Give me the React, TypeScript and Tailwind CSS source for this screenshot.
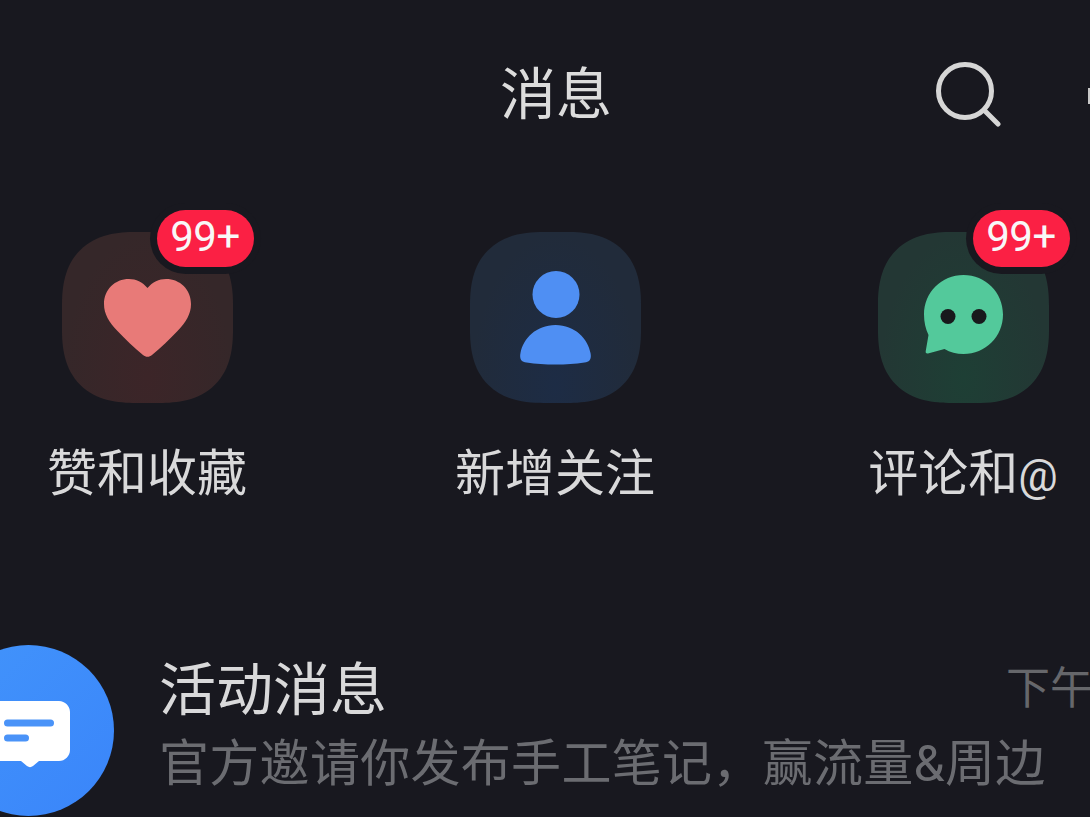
const font = { fontFamily: '"Noto Sans CJK SC", "Noto Sans", sans-serif' };
const latinFirst = { fontFamily: 'Roboto, "Noto Sans CJK SC", sans-serif' };

function Badge() {
  return (
    <div className="absolute left-[88px] top-[-29px] flex h-[71px] w-[111px] items-center justify-center rounded-[36px] bg-[#18181f]">
      <div className="flex h-[57px] w-[97px] items-center justify-center rounded-[29px] bg-[#fb2044] pb-[4px] text-[42px] leading-none tracking-[-0.5px] text-[#f8f8f8] [font-family:Roboto,sans-serif] font-normal">
        99+
      </div>
    </div>
  );
}

function Heart() {
  return (
    <svg width="87" height="78" viewBox="0 0 87 78" className="mt-[1px]">
      <path
        d="M43.5 9C38.500 3 32 0 25 0 11 0 0 10.500 0 25c0 10 5 18 13.500 27 7.500 8 16.500 16.500 25.500 24 2.800 2.400 6.200 2.400 9 0 9-7.500 18-16 25.500-24C82 43 87 35 87 25 87 10.500 76 0 62 0c-7 0-13.500 3-18.500 9Z"
        fill="#e87a78"
      />
    </svg>
  );
}

function Person() {
  return (
    <svg width="71" height="94" viewBox="0 0 71 94">
      <circle cx="36" cy="23.500" r="23.500" fill="#4f8ff3" />
      <path
        d="M35.500 54C16 54 3 68 0.500 82c-1 5 0 9 6 9.500C16 93 25 93.500 35.500 93.500S55 93 64.500 91.500c6-.5 7-4.500 6-9.500C68 68 55 54 35.500 54Z"
        fill="#4f8ff3"
      />
    </svg>
  );
}

function Chat() {
  return (
    <svg width="80" height="80" viewBox="0 0 80 80" className="mt-[-6px]">
      <path
        d="M40.500 0C62.500 0 80 17.500 80 39.500S62.500 79 40.500 79c-7 0-13.500-1.800-19-5L5 78.500c-1.500.4-2.600-.6-2.300-2.200L5.500 60C2.500 54 1 47 1 39.500 1 17.500 18.500 0 40.500 0Z"
        fill="#53c99b"
      />
      <circle cx="25" cy="41.500" r="7.500" fill="#18191c" />
      <circle cx="56" cy="41.500" r="7.500" fill="#18191c" />
    </svg>
  );
}

function Tile({
  label,
  gradient,
  badge,
  icon,
}: {
  label: React.ReactNode;
  gradient: string;
  badge?: boolean;
  icon: React.ReactNode;
}) {
  return (
    <div className="flex flex-col items-center">
      <div className={`relative flex h-[171px] w-[171px] items-center justify-center rounded-[74px] [corner-shape:superellipse(1.3)] ${gradient}`}>
        {icon}
        {badge && <Badge />}
      </div>
      <div className="mt-[42px] whitespace-nowrap text-[50px] leading-[58px] text-[#d9d9da]" style={latinFirst}>{label}</div>
    </div>
  );
}

function BubbleIcon() {
  return (
    <svg width="171" height="171" viewBox="0 0 171 171" className="shrink-0">
      <defs>
        <linearGradient id="avatar" x1="0" y1="0" x2="1" y2="1">
          <stop offset="0" stopColor="#4294fb" />
          <stop offset="1" stopColor="#3a85fa" />
        </linearGradient>
      </defs>
      <circle cx="85.500" cy="85.500" r="85.500" fill="url(#avatar)" />
      <path
        d="M36 56h80c6 0 11 5 11 11v38c0 6-5 11-11 11H96l-6 5c-2 1.500-4 1.500-6 0l-6-5H36c-6 0-11-5-11-11V67c0-6 5-11 11-11Z"
        fill="#ffffff"
      />
      <rect x="61" y="74.500" width="50" height="7" rx="3.500" fill="#4a93f8" />
      <rect x="61" y="89.500" width="25" height="7" rx="3.500" fill="#4a93f8" />
    </svg>
  );
}

export default function App() {
  return (
    <div className="relative h-[817px] w-[1090px] overflow-hidden bg-[#18181f]" style={font}>
      <div className="ml-[-56px] grid h-[186px] w-[1224px] grid-cols-3 items-center">
        <div />
        <div className="pb-[6px] text-center text-[56px] leading-none text-[#dcdcdc]">消息</div>
        <div className="flex justify-center pl-[8px] pt-[3px]">
          <svg width="66" height="66" viewBox="0 0 66 66" fill="none" stroke="#d6d6d6" strokeWidth="5" strokeLinecap="round">
            <circle cx="30" cy="29" r="26.500" />
            <path d="M50 49 63 62" />
          </svg>
        </div>
      </div>
      <div className="absolute right-0 top-[88px] h-[16px] w-[2px] bg-[#c8c8c8]" />

      <div className="ml-[-57px] grid w-[1224px] grid-cols-3 pt-[46px]">
        <Tile
          label="赞和收藏"
          badge
          gradient="bg-[radial-gradient(ellipse_at_50%_85%,#3c2528_0%,#352729_70%)]"
          icon={<Heart />}
        />
        <Tile
          label="新增关注"
          gradient="bg-[radial-gradient(ellipse_at_50%_90%,#1d2c45_0%,#212b3a_70%)]"
          icon={<Person />}
        />
        <Tile
          label={
            <>
              评论和<span className="text-[44px]">@</span>
            </>
          }
          badge
          gradient="bg-[radial-gradient(ellipse_at_50%_85%,#1e3f35_0%,#233734_70%)]"
          icon={<Chat />}
        />
      </div>

      <div className="ml-[-57px] mt-[140px] flex items-start gap-[45px]">
        <BubbleIcon />
        <div className="w-[932px] pt-[10px]">
          <div className="flex items-center justify-between">
            <span className="text-[57px] leading-[60px] text-[#d9d9da]">活动消息</span>
            <span className="w-[84px] whitespace-nowrap text-[44px] leading-[60px] text-[#66676b]">下午</span>
          </div>
          <div className="mt-[19px] whitespace-nowrap text-[50px] leading-[60px] tracking-[0.3px] text-[#6b6c71]" style={latinFirst}>官方邀请你发布手工笔记，赢流量&amp;周边</div>
        </div>
      </div>
    </div>
  );
}
